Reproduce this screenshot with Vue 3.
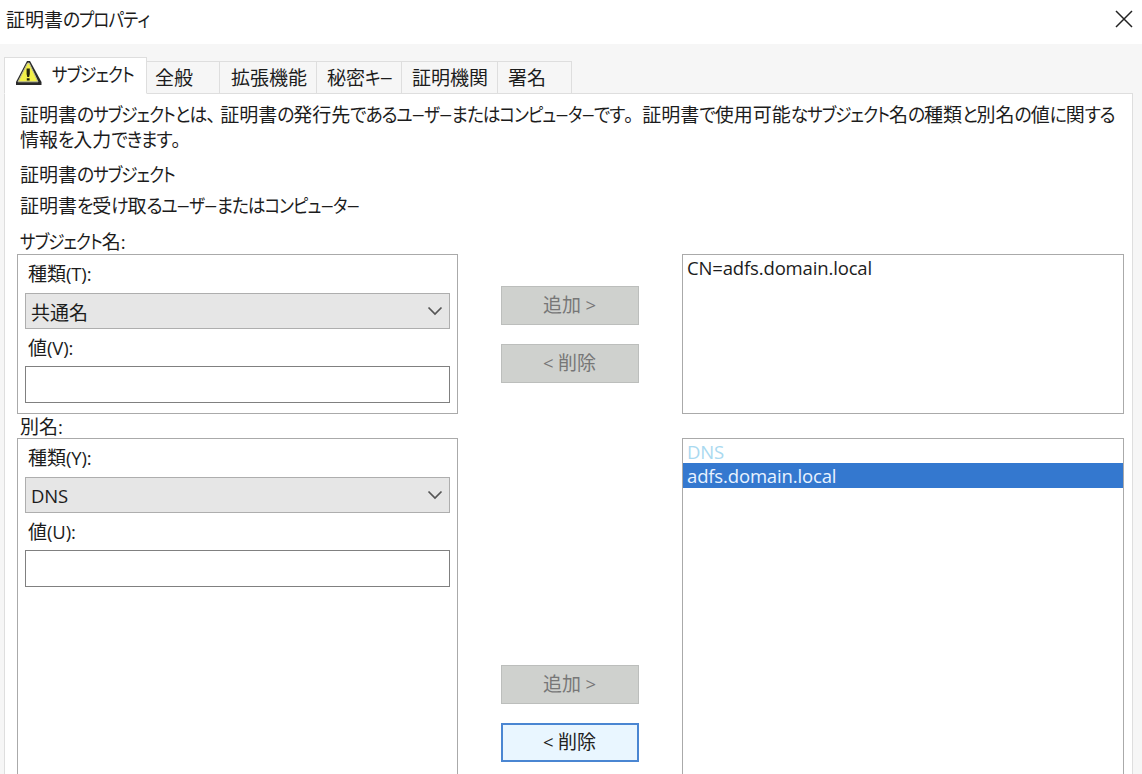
<script setup>
import { ref, h } from 'vue'

// kana is narrower than kanji, so split the text in runs
const KINDS = [
  ['latin', /^[\u0020-\u007e]/],
  ['comma', /^、/],
  ['stop', /^。/],
  ['bar', /^ー/],
  ['small', /^[ァィゥェォャュョッ]/],
  ['kata', /^[\u30a0-\u30ff]/],
  ['hira', /^[\u3040-\u309f]/],
  ['kanji', /^./]
]
const Jp = (props) => {
  const runs = []
  for (const ch of props.text) {
    const kind = KINDS.find(k => k[1].test(ch))[0]
    const last = runs[runs.length - 1]
    if (last && last.kind === kind) last.text += ch
    else runs.push({ kind, text: ch })
  }
  return h('span', { class: 'jp' }, runs.map(r => h('span', { class: r.kind }, r.text)))
}
Jp.props = ['text']

const tabs = ['サブジェクト', '全般', '拡張機能', '秘密キー', '証明機関', '署名']
const activeTab = ref(0)

const groups = ref([
  {
    label: 'サブジェクト名:',
    typeLabel: '種類(T):',
    type: '共通名',
    valueLabel: '値(V):',
    value: '',
    canRemove: false,
    entries: [{ text: 'CN=adfs.domain.local' }]
  },
  {
    label: '別名:',
    typeLabel: '種類(Y):',
    type: 'DNS',
    valueLabel: '値(U):',
    value: '',
    canRemove: true,
    entries: [
      { text: 'DNS', heading: true },
      { text: 'adfs.domain.local', selected: true }
    ]
  }
])
</script>

<template>
  <div class="window">
    <header class="titlebar">
      <Jp text="証明書のプロパティ" />
      <svg class="close" width="18" height="18" viewBox="0 0 18 18">
        <path d="M1 1L17 17M17 1L1 17" fill="none" stroke="#222" stroke-width="1.5" />
      </svg>
    </header>

    <nav class="tabs">
      <div
        v-for="(tab, i) in tabs"
        :key="tab"
        class="tab"
        :class="['tab-' + i, { active: i === activeTab }]"
        @click="activeTab = i"
      >
        <svg v-if="i === 0" class="warn" width="27" height="26" viewBox="0 0 27 26">
          <path d="M12 1H15L26.5 22V25H1V22Z" fill="#2a2a2a" />
          <path d="M12.6 3L3 21.8H23L14.2 3Z" fill="#f3f04a" stroke="#b9b9a0" stroke-width="1" />
          <path d="M11.6 8.5H14.8V14L14.1 17H12.3L11.6 14ZM11.8 18.3H14.6V20.6H11.8Z" fill="#25250c" />
        </svg>
        <Jp :text="tab" />
      </div>
    </nav>

    <main class="panel">
      <p class="intro">
        <Jp text="証明書のサブジェクトとは、証明書の発行先であるユーザーまたはコンピューターです。証明書で使用可能なサブジェクト名の種類と別名の値に関する" /><br>
        <Jp text="情報を入力できます。" />
      </p>
      <p class="heading"><Jp text="証明書のサブジェクト" /></p>
      <p class="sub"><Jp text="証明書を受け取るユーザーまたはコンピューター" /></p>

      <section v-for="(g, i) in groups" :key="g.label" class="group" :class="'group-' + i">
        <div class="group-label"><Jp :text="g.label" /></div>
        <div class="row">
          <div class="box">
            <div class="label"><Jp :text="g.typeLabel" /></div>
            <div class="select">
              <Jp :text="g.type" />
              <svg width="16" height="10" viewBox="0 0 16 10">
                <path d="M1.5 1.5L8 8L14.5 1.5" fill="none" stroke="#555" stroke-width="1.7" />
              </svg>
            </div>
            <div class="label second"><Jp :text="g.valueLabel" /></div>
            <input v-model="g.value" class="field" type="text">
          </div>
          <div class="buttons">
            <button disabled><Jp text="追加 >" /></button>
            <button :disabled="!g.canRemove"><Jp text="< 削除" /></button>
          </div>
          <div class="list">
            <div
              v-for="e in g.entries"
              :key="e.text"
              class="entry"
              :class="{ head: e.heading, selected: e.selected }"
            >
              <Jp :text="e.text" />
            </div>
          </div>
        </div>
      </section>
    </main>
  </div>
</template>

<style>
body {
  margin: 0;
  overflow: hidden;
}

/* text runs */
.jp {
  white-space: pre;
}
.hira,
.kata,
.small,
.bar {
  display: inline-block;
  font-feature-settings: "palt";
  line-height: 20px;
}
.hira {
  font-size: 17.8px;
  letter-spacing: -1.1px;
  transform: scaleY(1.06);
}
.kata,
.small {
  font-size: 16.5px;
  letter-spacing: -0.9px;
  transform: translateY(-1px) scaleY(1.14);
}
.bar {
  font-size: 13.5px;
  letter-spacing: -0.8px;
  transform: translateY(-1.5px);
}
.comma {
  letter-spacing: -5px;
}
.stop {
  letter-spacing: -1px;
}
.latin {
  font-family: "Open Sans", "Noto Sans", sans-serif;
  font-size: 18.5px;
  letter-spacing: -0.15px;
}
</style>

<style scoped>
* {
  box-sizing: border-box;
}

.window {
  display: flex;
  flex-direction: column;
  width: 1142px;
  height: 774px;
  overflow: hidden;
  background: #f6f6f6;
  color: #1c1c1c;
  font-family: "Noto Sans CJK JP", sans-serif;
  font-size: 19px;
  line-height: 25px;
}

.titlebar {
  display: flex;
  flex: none;
  justify-content: space-between;
  align-items: center;
  height: 44px;
  padding: 0 9px 7px 6px;
  background: #fff;
}

/* tabs */
.tabs {
  z-index: 1;
  display: flex;
  flex: none;
  align-items: flex-end;
  height: 50px;
  padding-left: 4px;
}
.tab {
  display: flex;
  align-items: center;
  height: 33px;
  padding: 0 0 3px 10px;
  border: 1px solid #dedede;
  border-left: none;
}
.tab.active {
  height: 37px;
  padding-bottom: 5px;
  border-left: 1px solid #dedede;
  border-bottom-color: #fff;
  background: #fff;
}
.warn {
  margin-right: 10px;
}
.tab-0 { width: 143px; }
.tab-1 { width: 73px; padding-left: 8px; }
.tab-2 { width: 97px; padding-left: 11px; }
.tab-3 { width: 85px; }
.tab-4 { width: 96px; }
.tab-5 { width: 74px; }

.panel {
  flex: 1;
  width: 1129px;
  margin: -1px 0 0 4px;
  padding: 7px 8px 0 12px;
  border: 1px solid #dedede;
  border-bottom: none;
  background: #fff;
}
p {
  height: 25px;
  margin: 0 0 0 3px;
  white-space: nowrap;
}
.intro {
  height: 50px;
}
.heading {
  margin-top: 10px;
}
.sub {
  margin-top: 6px;
}

/* groups */
.group-label {
  height: 25px;
  padding-left: 3px;
  line-height: 23px;
}
.group-0 {
  margin-top: 12px;
}
.row {
  display: flex;
}
.box {
  width: 441px;
  padding: 6px 7px 0;
  border: 1px solid #aaa;
}
.group-0 .row {
  height: 160px;
}
.group-1 .group-label {
  height: 24px;
}
.group-1 .row {
  height: 345px;
}
.label {
  height: 32px;
  padding-left: 3px;
  line-height: 24px;
}
.label.second {
  height: 37px;
  padding-top: 6px;
}
.select {
  display: flex;
  justify-content: space-between;
  align-items: center;
  height: 36px;
  padding: 0 6px 0 5px;
  border: 1px solid #aeaeae;
  background: #e6e6e6;
  line-height: 23px;
}
.field {
  display: block;
  width: 100%;
  height: 37px;
  border: 1px solid #808080;
  background: #fff;
  outline: none;
}

.buttons {
  display: flex;
  flex-direction: column;
  gap: 19px;
  width: 138px;
  margin: 32px 43px 0;
}
.group-1 .buttons {
  margin-top: 227px;
}
button {
  height: 39px;
  padding: 0 1px 3px 0;
  border: 2px solid #4a86d2;
  background: #e9f6ff;
  color: #222;
  font: inherit;
}
button:disabled {
  border: 1px solid #bcbebc;
  background: #cfd1ce;
  color: #777;
}

.list {
  width: 442px;
  border: 1px solid #aaa;
}
.entry {
  height: 25px;
  padding-left: 4px;
  line-height: 23px;
}
.entry.head {
  height: 24px;
  color: #a9d9f0;
}
.entry.selected {
  background: #3478cf;
  color: #e8f2ff;
}
</style>
